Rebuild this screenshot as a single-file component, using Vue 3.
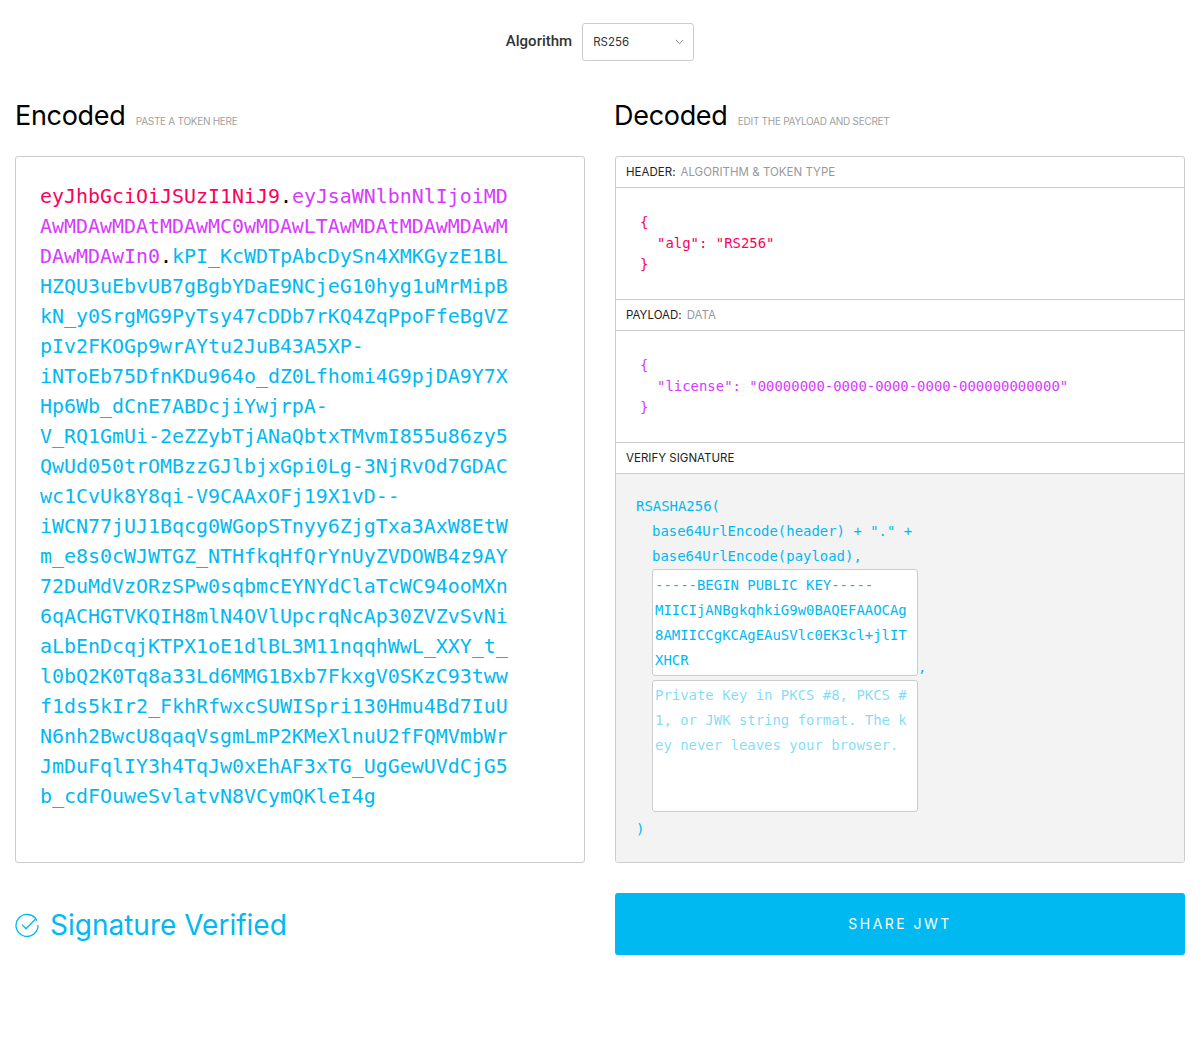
<script setup>
const seg1 = 'eyJhbGciOiJSUzI1NiJ9'
const seg2 = 'eyJsaWNlbnNlIjoiMD\nAwMDAwMDAtMDAwMC0wMDAwLTAwMDAtMDAwMDAwM\nDAwMDAwIn0'
const seg3 = [
  'kPI_KcWDTpAbcDySn4XMKGyzE1BL',
  'HZQU3uEbvUB7gBgbYDaE9NCjeG10hyg1uMrMipB',
  'kN_y0SrgMG9PyTsy47cDDb7rKQ4ZqPpoFfeBgVZ',
  'pIv2FKOGp9wrAYtu2JuB43A5XP-',
  'iNToEb75DfnKDu964o_dZ0Lfhomi4G9pjDA9Y7X',
  'Hp6Wb_dCnE7ABDcjiYwjrpA-',
  'V_RQ1GmUi-2eZZybTjANaQbtxTMvmI855u86zy5',
  'QwUd050trOMBzzGJlbjxGpi0Lg-3NjRvOd7GDAC',
  'wc1CvUk8Y8qi-V9CAAxOFj19X1vD--',
  'iWCN77jUJ1Bqcg0WGopSTnyy6ZjgTxa3AxW8EtW',
  'm_e8s0cWJWTGZ_NTHfkqHfQrYnUyZVDOWB4z9AY',
  '72DuMdVzORzSPw0sqbmcEYNYdClaTcWC94ooMXn',
  '6qACHGTVKQIH8mlN4OVlUpcrqNcAp30ZVZvSvNi',
  'aLbEnDcqjKTPX1oE1dlBL3M11nqqhWwL_XXY_t_',
  'l0bQ2K0Tq8a33Ld6MMG1Bxb7FkxgV0SKzC93tww',
  'f1ds5kIr2_FkhRfwxcSUWISpri130Hmu4Bd7IuU',
  'N6nh2BwcU8qaqVsgmLmP2KMeXlnuU2fFQMVmbWr',
  'JmDuFqlIY3h4TqJw0xEhAF3xTG_UgGewUVdCjG5',
  'b_cdFOuweSvlatvN8VCymQKleI4g'
].join('\n')
const publicKey = '-----BEGIN PUBLIC KEY-----\nMIICIjANBgkqhkiG9w0BAQEFAAOCAg8AMIICCgKCAgEAuSVlc0EK3cl+jlITXHCR'
const privateKey = 'Private Key in PKCS #8, PKCS #1, or JWK string format. The key never leaves your browser.'
</script>

<template>
  <div class="page">
    <div class="algo">
      <span class="algo-label">Algorithm</span>
      <div class="select">
        <span>RS256</span>
        <svg class="chev" width="9" height="6" viewBox="0 0 9 6"><path d="M.7.9 4.5 4.7 8.3.9" fill="none" stroke="#888" stroke-width="1"/></svg>
      </div>
    </div>

    <div class="columns">
      <section class="col">
        <h2 class="title">Encoded <small>PASTE A TOKEN HERE</small></h2>
        <div class="panel token"><span class="red">{{ seg1 }}</span><span class="dot">.</span><span class="purple">{{ seg2 }}</span><span class="dot">.</span><span class="cyan">{{ seg3 }}</span></div>
      </section>

      <section class="col">
        <h2 class="title decoded-title">Decoded <small>EDIT THE PAYLOAD AND SECRET</small></h2>
        <div class="panel decoded">
          <div class="head">HEADER:<em>ALGORITHM &amp; TOKEN TYPE</em></div>
          <div class="json red">
            <div>{</div>
            <div class="ind">"alg": "RS256"</div>
            <div>}</div>
          </div>
          <div class="head top">PAYLOAD:<em>DATA</em></div>
          <div class="json purple">
            <div>{</div>
            <div class="ind">"license": "00000000-0000-0000-0000-000000000000"</div>
            <div>}</div>
          </div>
          <div class="head top">VERIFY SIGNATURE</div>
          <div class="sig">
            <div>RSASHA256(</div>
            <div class="ind">base64UrlEncode(header) + "." +</div>
            <div class="ind">base64UrlEncode(payload),</div>
            <div class="keyrow">
              <div class="key pub">{{ publicKey }}</div><span class="comma">,</span>
            </div>
            <div class="key priv">{{ privateKey }}</div>
            <div class="close">)</div>
          </div>
        </div>
      </section>
    </div>

    <div class="columns foot">
      <div class="verified">
        <svg width="24" height="24" viewBox="0 0 24 24" fill="none" stroke="#00b9f1" stroke-width="1.3">
          <path d="M21.9 7.6A11 11 0 1 0 23 12"/>
          <path d="M7 11.6l4 4.2 9.4-9.6"/>
        </svg>
        <span>Signature Verified</span>
      </div>
      <button class="share">SHARE JWT</button>
    </div>
  </div>
</template>

<style scoped>
.page {
  width: 1200px;
  height: 1059px;
  box-sizing: border-box;
  padding: 23px 15px 0;
  font-family: Inter, "Noto Sans", sans-serif;
  background: #fff;
  color: #000;
}
.algo {
  display: flex;
  justify-content: center;
  align-items: center;
  gap: 10px;
  height: 38px;
}
.algo-label {
  font-family: Roboto, sans-serif;
  font-weight: 500;
  font-size: 15px;
  padding-bottom: 2px;
  color: #333;
}
.select {
  width: 112px;
  height: 38px;
  box-sizing: border-box;
  border: 1px solid #ccc;
  border-radius: 3px;
  padding: 0 9px 0 10px;
  display: flex;
  align-items: center;
  justify-content: space-between;
  font-size: 11.5px;
  color: #333;
}
.columns {
  display: flex;
  gap: 30px;
}
.col {
  width: 570px;
}
.title {
  margin: 38px 0 0;
  height: 57px;
  line-height: 34px;
  font-weight: 400;
  font-size: 27px;
  letter-spacing: -0.3px;
  white-space: nowrap;
}
.decoded-title { margin-left: -1px; }
.title small {
  margin-left: 3px;
  font-size: 10px;
  letter-spacing: -0.28px;
  color: #9f9f9f;
}
.panel {
  height: 707px;
  box-sizing: border-box;
  border: 1px solid #ccc;
  border-radius: 3px;
  font-family: "DejaVu Sans Mono", "Liberation Mono", monospace;
}
.token {
  padding: 25px 24px 0;
  font-size: 19.93px;
  line-height: 30px;
  white-space: pre-wrap;
}
.red { color: #fb015b; }
.purple { color: #d63aff; }
.cyan { color: #00b9f1; }
.dot { color: #000; }
.decoded {
  display: flex;
  flex-direction: column;
  overflow: hidden;
}
.head {
  height: 31px;
  box-sizing: border-box;
  border-bottom: 1px solid #ccc;
  padding-left: 10px;
  display: flex;
  align-items: center;
  font-family: Inter, sans-serif;
  font-size: 11.5px;
  letter-spacing: 0.02px;
  color: #222;
}
.head.top { border-top: 1px solid #ccc; height: 32px; }
.head em {
  font-style: normal;
  margin-left: 5px;
  color: #999;
}
.json {
  height: 111px;
  box-sizing: border-box;
  padding: 24px 24px 0;
  font-size: 13.95px;
  line-height: 21px;
}
.json .ind { padding-left: 17px; }
.sig {
  flex: 1;
  background: #f3f3f3;
  padding: 20px 20px 0;
  color: #00b9f1;
  font-size: 13.95px;
  line-height: 25px;
}
.sig .ind { padding-left: 16px; }
.keyrow {
  display: flex;
  align-items: flex-end;
  margin-left: 16px;
}
.key {
  width: 266px;
  box-sizing: border-box;
  background: #fff;
  border: 1px solid #ccc;
  border-radius: 3px;
  padding: 3px 2px 2px;
  white-space: pre-wrap;
  word-break: break-all;
}
.pub { height: 107px; }
.comma { position: relative; top: 4px; }
.priv {
  height: 132px;
  margin: 4px 0 0 16px;
  padding-top: 2px;
  color: rgba(0, 185, 241, 0.5);
}
.close { margin-top: 5px; }
.foot { margin-top: 30px; align-items: center; }
.verified {
  width: 570px;
  display: flex;
  align-items: center;
  gap: 11px;
  padding-top: 1px;
  font-size: 28px;
  color: #00b9f1;
}
.share {
  width: 570px;
  height: 62px;
  border: 0;
  border-radius: 3px;
  padding: 0 0 2px;
  background: #00b9f1;
  color: #fff;
  font-family: Inter, sans-serif;
  font-size: 14px;
  letter-spacing: 2.45px;
}
</style>

<style>
html, body { margin: 0; background: #fff; }
</style>
